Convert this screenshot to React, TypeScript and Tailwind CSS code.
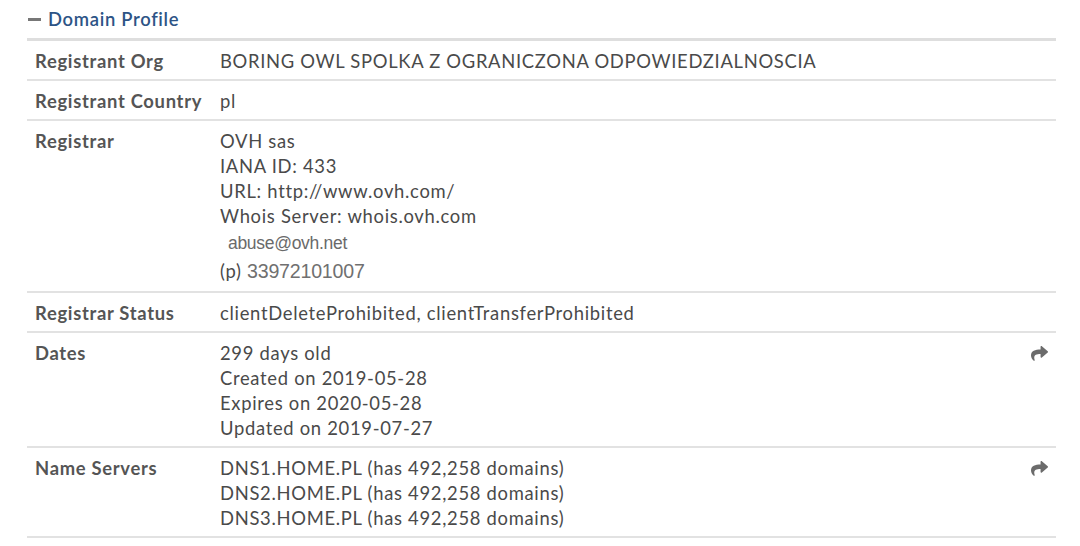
import React from "react";

const ShareIcon = () => (
  <svg width="17" height="15" viewBox="0 0 512 448" className="fill-[#6b6b6b]">
    <path d="M503.7 154.9 327.7 2.9C312.3-10.4 288 .4 288 21v80.1C127.4 102.9 0 135.1 0 287.4c0 61.5 39.6 122.4 83.4 154.2 13.6 9.9 33.1-2.5 28.1-18.6C66.1 278.3 132.6 240.6 288 238.4V326.4c0 20.6 24.3 31.4 39.7 18.1l176-152c11.1-9.6 11.1-26.7 0-36.2z" />
  </svg>
);

type Row = { label: string; lines: React.ReactNode[]; icon?: boolean };

const rows: Row[] = [
  { label: "Registrant Org", lines: ["BORING OWL SPOLKA Z OGRANICZONA ODPOWIEDZIALNOSCIA"] },
  { label: "Registrant Country", lines: ["pl"] },
  {
    label: "Registrar",
    lines: [
      "OVH sas",
      "IANA ID: 433",
      "URL: http://www.ovh.com/",
      "Whois Server: whois.ovh.com",
      <span className="inline-block h-[28px] pl-[8px] pt-[2px] text-[17.5px] text-[#6a6a6a] [font-family:'Liberation_Sans',Arial,sans-serif] tracking-[-0.3px]">abuse@ovh.net</span>,
      <span className="inline-block h-[29px] pt-[2px]">
        (p){" "}
        <span className="text-[19.6px] text-[#707070] [font-family:'Liberation_Sans',Arial,sans-serif] tracking-[-0.2px]">33972101007</span>
      </span>,
    ],
  },
  { label: "Registrar Status", lines: ["clientDeleteProhibited, clientTransferProhibited"] },
  {
    label: "Dates",
    lines: ["299 days old", "Created on 2019-05-28", "Expires on 2020-05-28", "Updated on 2019-07-27"],
    icon: true,
  },
  {
    label: "Name Servers",
    lines: [
      "DNS1.HOME.PL (has 492,258 domains)",
      "DNS2.HOME.PL (has 492,258 domains)",
      "DNS3.HOME.PL (has 492,258 domains)",
    ],
    icon: true,
  },
];

export default function App() {
  return (
    <div className="w-[1080px] h-[546px] bg-white [font-family:Lato,'Noto_Sans',sans-serif] text-[18.4px] leading-[25px] text-[#4a4a4a] pl-[27px] pr-[24px] pt-[7px] tracking-[0.7px]">
      <div className="flex items-center h-[25px] pl-[1px]">
        <span className="inline-block w-[13px] h-[3px] bg-[#777] mr-[7px]" />
        <span className="font-semibold text-[#2d5486]">Domain Profile</span>
      </div>
      <div className="mt-[6px] border-t-[3px] border-[#dedede]">
        {rows.map((r, i) => (
          <div key={i} className="flex border-b-[2px] border-[#e2e2e2]">
            <div className="w-[193px] shrink-0 pl-[8px] pt-[8px] pb-[5px] font-bold text-[#555]">{r.label}</div>
            <div className="flex-1 pt-[8px] pb-[5px]">
              {r.lines.map((l, j) => (
                <div key={j}>{l}</div>
              ))}
            </div>
            {r.icon && (
              <div className="shrink-0 pt-[13px] pr-[8px]">
                <ShareIcon />
              </div>
            )}
          </div>
        ))}
      </div>
    </div>
  );
}
